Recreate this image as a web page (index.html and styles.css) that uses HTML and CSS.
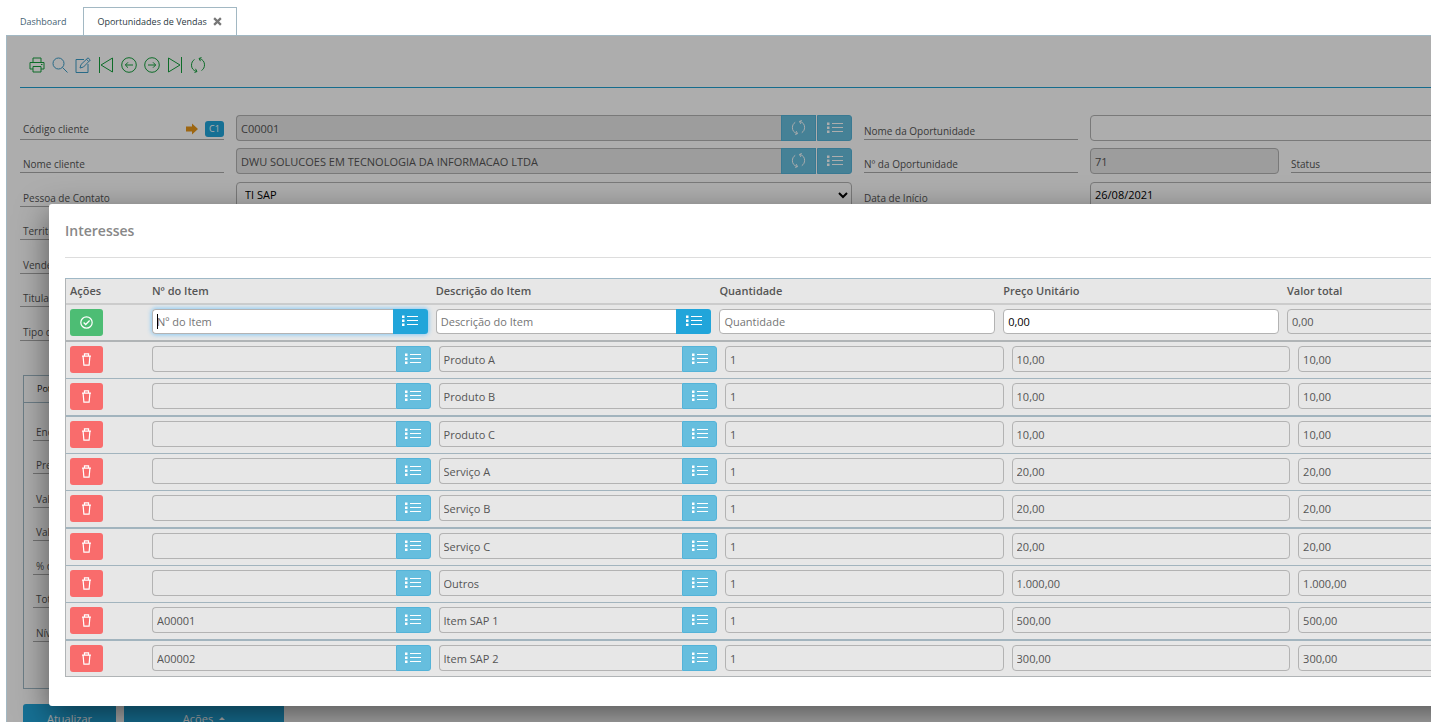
FILE: index.html
```html
<!DOCTYPE html>
<html lang="pt-BR">
<head>
    <meta charset="UTF-8">
    <meta name="viewport" content="width=device-width, initial-scale=1.0">
    <title>Oportunidades de Vendas</title>
    <link rel="stylesheet" href="styles.css">
</head>
<body>
    <svg class="sprite" aria-hidden="true">
        <symbol id="i-print" viewBox="0 0 16 16"><path d="M4 5V1h8v4M4 12H1V5.500h14V12h-3M4 9.500h8V15H4zM12 7.500h1.500"/></symbol>
        <symbol id="i-search" viewBox="0 0 16 16"><circle cx="6.500" cy="6.500" r="5.500"/><path d="M10.500 10.500L15.500 15.500"/></symbol>
        <symbol id="i-edit" viewBox="0 0 16 16"><path d="M9 2.500H1v13h12V7M5 11l1-3.500L13 .8l2.300 2.200L8.500 10zM11.500 2.300l2.200 2.200"/></symbol>
        <symbol id="i-first" viewBox="0 0 16 16"><path d="M1.500 0v16M14.500 1v14L3 8z"/></symbol>
        <symbol id="i-last" viewBox="0 0 16 16"><path d="M14.500 0v16M1.500 1v14L13 8z"/></symbol>
        <symbol id="i-prev" viewBox="0 0 16 16"><circle cx="8" cy="8" r="7.300"/><path d="M12 8H4.500M7 5.300L4.300 8 7 10.700"/></symbol>
        <symbol id="i-next" viewBox="0 0 16 16"><circle cx="8" cy="8" r="7.300"/><path d="M4 8h7.500M9 5.300L11.700 8 9 10.700"/></symbol>
        <symbol id="i-sync" viewBox="0 0 16 16"><path d="M6.500 14.500C3 13.500 1.500 11 1.500 8.200c0-2.500 1-4.400 3-5.700M9.500 1.500c3.500 1 5 3.500 5 6.300 0 2.500-1 4.400-3 5.700M11.500 .5L9 1.500l1.500 2.700M4.500 15.500l2.500-1-1.500-2.700"/></symbol>
        <symbol id="i-list" viewBox="0 0 16 12"><path d="M5 1.500h11M5 5.500h11M5 9.500h11"/><path class="dots" d="M0 .5h2.500v2.500H0zM0 4.500h2.500v2.500H0zM0 8.500h2.500v2.500H0z"/></symbol>
        <symbol id="i-check" viewBox="0 0 16 16"><circle cx="8" cy="8" r="7"/><path d="M4.500 8l2.500 2.500 4.800-5"/></symbol>
        <symbol id="i-trash" viewBox="0 0 16 16"><path d="M2.500 3.800h11M5.500 3.500V1.200h5v2.300M3.800 4L4.800 15h6.400l1-11"/></symbol>
        <symbol id="i-arrow" viewBox="0 0 12 12"><path d="M0 3.500h6V0.500L12 6l-6 5.500V8.500H0z"/></symbol>
    </svg>

    <nav class="tabs">
        <a href="#" class="tab">Dashboard</a>
        <a href="#" class="tab active">Oportunidades de Vendas
            <svg class="close" viewBox="0 0 8 8"><path d="M1 1l6 6M7 1L1 7"/></svg>
        </a>
    </nav>

    <main class="panel">
        <!-- Toolbar -->
        <div class="toolbar">
            <button type="button" aria-label="Imprimir"><svg><use href="#i-print"/></svg></button>
            <button type="button" aria-label="Pesquisar" class="blue"><svg><use href="#i-search"/></svg></button>
            <button type="button" aria-label="Editar" class="blue"><svg><use href="#i-edit"/></svg></button>
            <button type="button" aria-label="Primeiro"><svg><use href="#i-first"/></svg></button>
            <button type="button" aria-label="Anterior"><svg><use href="#i-prev"/></svg></button>
            <button type="button" aria-label="Próximo"><svg><use href="#i-next"/></svg></button>
            <button type="button" aria-label="Último"><svg><use href="#i-last"/></svg></button>
            <button type="button" aria-label="Recarregar"><svg><use href="#i-sync"/></svg></button>
        </div>

        <!-- Opportunity form -->
        <form class="form">
            <div class="column left">
                <div class="label tagged">
                    <label for="clientCode">Código cliente</label>
                    <svg class="arrow"><use href="#i-arrow"/></svg>
                    <span class="tag">C1</span>
                </div>
                <div class="group">
                    <input type="text" id="clientCode" value="C00001" disabled>
                    <button type="button" aria-label="Atualizar código" disabled><svg class="sync"><use href="#i-sync"/></svg></button>
                    <button type="button" aria-label="Listar códigos" disabled><svg class="list"><use href="#i-list"/></svg></button>
                </div>
                <label class="label" for="clientName">Nome cliente</label>
                <div class="group">
                    <input type="text" id="clientName" value="DWU SOLUCOES EM TECNOLOGIA DA INFORMACAO LTDA" disabled>
                    <button type="button" aria-label="Atualizar nome" disabled><svg class="sync"><use href="#i-sync"/></svg></button>
                    <button type="button" aria-label="Listar nomes" disabled><svg class="list"><use href="#i-list"/></svg></button>
                </div>
                <label class="label" for="contact">Pessoa de Contato</label>
                <select id="contact"><option>TI SAP</option></select>
                <label class="label" for="territory">Território</label>
                <input type="text" id="territory">
                <label class="label" for="seller">Vendedor</label>
                <input type="text" id="seller">
                <label class="label" for="holder">Titular</label>
                <input type="text" id="holder">
                <label class="label" for="kind">Tipo de Oportunidade</label>
                <input type="text" id="kind">
            </div>
            <div class="column right">
                <label class="label" for="oppName">Nome da Oportunidade</label>
                <input type="text" id="oppName" class="wide">
                <label class="label" for="oppNumber">Nº da Oportunidade</label>
                <input type="text" id="oppNumber" value="71" disabled>
                <label class="label" for="status">Status</label>
                <input type="text" id="status">
                <label class="label" for="startDate">Data de Início</label>
                <input type="text" id="startDate" class="wide" value="26/08/2021">
            </div>
        </form>

        <section class="potential">
            <h2>Potencial</h2>
            <div class="column">
                <span class="label">Encerramento</span>
                <span class="label">Previsão</span>
                <span class="label">Valor potencial</span>
                <span class="label">Valor ponderado</span>
                <span class="label">% de lucro</span>
                <span class="label">Total</span>
                <span class="label">Nível de interesse</span>
            </div>
        </section>

        <div class="footer">
            <button type="button">Atualizar</button>
            <button type="button" class="large">Ações <span class="caret"></span></button>
        </div>

        <div class="backdrop"></div>

        <!-- Interests modal -->
        <div class="modal" role="dialog" aria-labelledby="modalTitle">
            <h1 id="modalTitle">Interesses</h1>
            <table>
                <thead>
                    <tr>
                        <th>Ações</th>
                        <th>Nº do Item</th>
                        <th>Descrição do Item</th>
                        <th>Quantidade</th>
                        <th>Preço Unitário</th>
                        <th>Valor total</th>
                    </tr>
                </thead>
                <tbody id="itemRows">
                    <tr class="entry">
                        <td><button type="button" class="action add" aria-label="Adicionar"><svg><use href="#i-check"/></svg></button></td>
                        <td>
                            <div class="group focused">
                                <input type="text" placeholder="Nº do Item" aria-label="Nº do Item">
                                <button type="button" aria-label="Listar itens"><svg class="list"><use href="#i-list"/></svg></button>
                            </div>
                        </td>
                        <td>
                            <div class="group">
                                <input type="text" placeholder="Descrição do Item" aria-label="Descrição do Item">
                                <button type="button" aria-label="Listar descrições"><svg class="list"><use href="#i-list"/></svg></button>
                            </div>
                        </td>
                        <td><input type="text" placeholder="Quantidade" aria-label="Quantidade"></td>
                        <td><input type="text" value="0,00" aria-label="Preço Unitário"></td>
                        <td><input type="text" value="0,00" aria-label="Valor total" disabled></td>
                    </tr>
                </tbody>
            </table>
        </div>
    </main>

    <script>
        const items = [
            ['', 'Produto A', '1', '10,00', '10,00'],
            ['', 'Produto B', '1', '10,00', '10,00'],
            ['', 'Produto C', '1', '10,00', '10,00'],
            ['', 'Serviço A', '1', '20,00', '20,00'],
            ['', 'Serviço B', '1', '20,00', '20,00'],
            ['', 'Serviço C', '1', '20,00', '20,00'],
            ['', 'Outros', '1', '1.000,00', '1.000,00'],
            ['A00001', 'Item SAP 1', '1', '500,00', '500,00'],
            ['A00002', 'Item SAP 2', '1', '300,00', '300,00']
        ];
        const names = ['Nº do Item', 'Descrição do Item', 'Quantidade', 'Preço Unitário', 'Valor total'];
        const body = document.getElementById('itemRows');

        items.forEach(item => {
            const tr = document.createElement('tr');
            tr.innerHTML = `<td><button type="button" class="action remove" aria-label="Remover"><svg><use href="#i-trash"/></svg></button></td>` +
                item.map((value, i) => {
                    const input = `<input type="text" value="${value}" aria-label="${names[i]}" disabled>`;
                    // only the first two columns have a lookup button
                    return i < 2
                        ? `<td><div class="group">${input}<button type="button" aria-label="Listar" disabled><svg class="list"><use href="#i-list"/></svg></button></div></td>`
                        : `<td>${input}</td>`;
                }).join('');
            body.appendChild(tr);
        });
    </script>
</body>
</html>
```

FILE: styles.css
```css
* {
    box-sizing: border-box;
}
html {
    overflow: hidden;
}
body {
    display: flex;
    flex-direction: column;
    height: 100vh;
    margin: 0;
    padding: 7px 0 0 6px;
    overflow: hidden;
    font-family: "Open Sans", "Noto Sans", sans-serif;
    font-size: 11px;
    color: #555;
    background-color: #fff;
}
.sprite {
    position: absolute;
    width: 0;
    height: 0;
}
svg {
    fill: none;
    stroke: currentColor;
}
.dots {
    fill: currentColor;
    stroke: none;
}
button {
    display: inline-flex;
    align-items: center;
    justify-content: center;
    padding: 0;
    border: none;
    color: #fff;
    font: inherit;
    cursor: pointer;
}

/* Tabs */
.tabs {
    display: flex;
    flex: none;
    height: 28px;
}
.tab {
    display: flex;
    align-items: center;
    padding: 0 17px 0 14px;
    font-size: 9px;
    color: #456272;
    text-decoration: none;
}
.tab.active {
    position: relative;
    z-index: 1;
    gap: 6px;
    padding: 0 14px 0 13px;
    border: 1px solid #a2b8c3;
    border-bottom: none;
    background-color: #fff;
    color: #2c3a42;
}
.close {
    width: 9px;
    height: 9px;
    stroke: #777;
    stroke-width: 2;
}

/* The panel runs past the right edge of the window */
.panel {
    position: relative;
    flex: 1;
    min-height: 0;
    width: 115vw;
    padding: 0 13px;
    border-left: 1px solid #a2b8c3;
    border-top: 1px solid #a2b8c3;
}
.toolbar {
    height: 52px;
    padding: 13px 0 0 9px;
    border-bottom: 1px solid #1f9fd0;
    display: flex;
    gap: 7px;
}
.toolbar button {
    width: 16px;
    height: 32px;
    background: none;
    color: #14a03c;
}
.toolbar button.blue {
    color: #3c9cc8;
}
.toolbar svg {
    width: 16px;
    height: 16px;
}

/* Form */
.form {
    display: flex;
    gap: 12px;
    padding-top: 27px;
}
.column {
    display: grid;
    grid-auto-rows: 1fr;
    align-items: start;
    column-gap: 12px;
    height: 234px;
}
.left {
    grid-template-columns: 204px 1fr;
    flex: 0 0 832px;
}
.right {
    grid-template-columns: 214px 189px 204px 1fr;
    grid-template-rows: repeat(7, 1fr);
    flex: 1;
}
.wide {
    grid-column: span 3;
}
.label {
    display: flex;
    align-items: flex-end;
    height: 25px;
    padding: 0 0 1px 3px;
    border-bottom: 1px solid #aaa;
    font-size: 10px;
    line-height: 14px;
}
.right .label {
    padding-left: 0;
}
.tagged {
    align-items: center;
    padding: 4px 0 0 3px;
}
.tagged label {
    flex: 1;
}
.arrow {
    width: 12px;
    height: 12px;
    margin-right: 7px;
    fill: #e8971a;
    stroke: none;
}
.tag {
    width: 19px;
    border-radius: 3px;
    background-color: #21a5da;
    color: #fff;
    font-size: 9px;
    line-height: 16px;
    text-align: center;
}
input, select {
    width: 100%;
    min-width: 0;
    height: 26px;
    margin: 0;
    padding: 0 4px;
    border: 1px solid #b3b3b3;
    border-radius: 4px;
    background-color: #fff;
    color: #000;
    font: inherit;
}
input::placeholder {
    color: #757575;
}
input:disabled {
    background-color: #e7e7e7;
    color: #555;
}
.group {
    display: flex;
}
.group input {
    flex: 1;
    border-right: none;
    border-radius: 4px 0 0 4px;
}
.group button {
    width: 35px;
    height: 26px;
    padding-bottom: 1px;
    background-color: #21a5da;
}
.group button:last-child {
    border-radius: 0 3px 3px 0;
}
.group button:disabled {
    border: 1px solid #54b3d8;
    background-color: #66bede;
}
.form .group button + button {
    margin-left: 1px;
}
.list {
    width: 16px;
    height: 12px;
}
.sync {
    width: 15px;
    height: 15px;
}

/* Lower box */
.potential {
    height: 314px;
    margin: 26px 3px 0;
    border: 1px solid #9fb8c6;
}
.potential h2 {
    margin: 0;
    padding-left: 13px;
    border-bottom: 1px solid #9fb8c6;
    color: #222;
    font-size: 9px;
    font-weight: normal;
    line-height: 26px;
}
.potential .column {
    width: 205px;
    margin: 13px 9px;
}
.footer {
    display: flex;
    gap: 8px;
    padding: 15px 3px 0;
}
.footer button {
    width: 93px;
    height: 28px;
    border-radius: 3px;
    background-color: #21a5da;
}
.footer button.large {
    gap: 6px;
    width: 160px;
}
.caret {
    border: 3px solid transparent;
    border-top: none;
    border-bottom-color: #fff;
}

/* Modal */
.backdrop {
    position: absolute;
    inset: 0;
    background-color: rgba(0, 0, 0, 0.32);
}
.modal {
    position: absolute;
    top: 168px;
    left: 42px;
    right: 50px;
    padding: 0 16px 29px;
    border-radius: 3px;
    background-color: #fff;
    box-shadow: 0 10px 32px rgba(0, 0, 0, 0.5);
}
.modal h1 {
    margin: 0 0 20px;
    border-bottom: 1px solid #ddd;
    color: #888;
    font-size: 14px;
    font-weight: 600;
    line-height: 53px;
}
table {
    display: block;
    border: 1px solid #b0b4b6;
    border-top-color: #9fb8c6;
    background-color: #e7e7e7;
}
thead, tbody {
    display: block;
}
tr {
    display: grid;
    grid-template-columns: 82px repeat(5, 1fr);
    height: 37px;
    padding-left: 4px;
    border-bottom: 1px solid #a2b4be;
}
tbody tr:nth-child(3n) {
    height: 38px;
    border-bottom-width: 2px;
}
tbody tr:last-child {
    height: 35px;
    border-bottom: none;
}
thead tr, tr.entry {
    padding-right: 14px;
}
thead tr {
    height: 26px;
    border-bottom: 2px solid #ccc;
}
tr.entry {
    border-bottom: 2px solid #b0b4b6;
}
th {
    padding: 0;
    font-weight: 600;
    line-height: 24px;
    text-align: left;
}
td {
    padding: 4px 8px 0 0;
}
.entry input, .entry .group button {
    height: 25px;
}
.focused {
    position: relative;
    border-radius: 4px;
    box-shadow: 0 0 4px 1px #8ccbf5;
}
/* text cursor */
.focused::before {
    content: "";
    position: absolute;
    top: 5px;
    left: 5px;
    width: 1px;
    height: 15px;
    background-color: #000;
}
.action {
    width: 33px;
    height: 27px;
    border-radius: 3px;
}
.action svg {
    width: 13px;
    height: 13px;
    stroke-width: 1.5;
}
.add {
    background-color: #4dbd74;
}
.remove {
    background-color: #f96c6c;
}
```
